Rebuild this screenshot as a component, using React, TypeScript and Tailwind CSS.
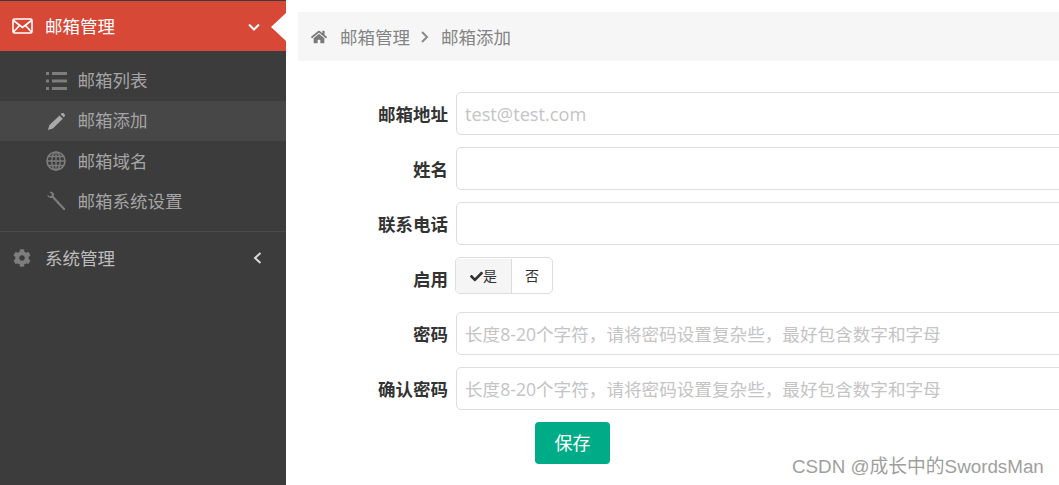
import React from "react";
import { FaCheck, FaCog, FaHome } from "react-icons/fa";

const font = "font-['Liberation_Sans','Noto_Sans_CJK_SC',sans-serif]";
const inputFont = "font-['Open_Sans','Noto_Sans_CJK_SC',sans-serif]";
const hint = "长度8-20个字符，请将密码设置复杂些，最好包含数字和字母";

const ListIcon = () => (
  <svg viewBox="0 0 21 18" className="h-[18px] w-[21px]" fill="currentColor">
    <path d="M0 0h3v3H0zM6 0h15v3H6zM0 7.500h3v3H0zM6 7.500h15v3H6zM0 15h3v3H0zM6 15h15v3H6z" />
  </svg>
);

const PencilIcon = () => (
  <svg viewBox="0 0 20 20" className="h-[19px] w-[19px] text-[#a9a9a9]" fill="currentColor">
    <path d="M13.200 3.600 16.600 7 6.200 17.400 1 19 2.600 13.800zM14.400 2.400 15.400 1.400c.6-.6 1.400-.6 2 0l1.200 1.200c.6.6.6 1.400 0 2l-1 1z" />
  </svg>
);

const GlobeIcon = () => (
  <svg viewBox="0 0 20 20" className="h-5 w-5" fill="none" stroke="currentColor" strokeWidth="1.3">
    <circle cx="10" cy="10" r="9" strokeWidth="1.6" />
    <ellipse cx="10" cy="10" rx="4.2" ry="9" />
    <path d="M10 1v18M1 10h18M2.400 5.500h15.200M2.400 14.500h15.200" />
  </svg>
);

const WrenchIcon = () => (
  <svg viewBox="0 0 20 20" className="h-5 w-5" fill="currentColor">
    <path d="M1.300 3.400 3.600 5.400 5.500 4.800 5.800 3 3.400 1C5 .3 7 .8 7.700 2.300c.4 1 .4 2 0 2.900L18.900 17.200c.5.600.4 1.200 0 1.600-.5.400-1.100.4-1.600-.1L6.100 6.800c-1.300.4-2.700.2-3.700-.7-.7-.7-1.100-1.700-1.100-2.700z" />
  </svg>
);

const subItems = [
  { label: "邮箱列表", icon: <ListIcon />, rowClass: "h-10", textClass: "pt-px" },
  { label: "邮箱添加", icon: <PencilIcon />, rowClass: "h-10 bg-[#474747]", textClass: "pt-px" },
  { label: "邮箱域名", icon: <GlobeIcon />, rowClass: "h-10", textClass: "pt-[3px]" },
  { label: "邮箱系统设置", icon: <WrenchIcon />, rowClass: "h-10", textClass: "pt-[3px]" },
];

const Chevron = ({ d, className }: { d: string; className: string }) => (
  <svg viewBox="0 0 12 12" className={className} fill="none" stroke="currentColor" strokeWidth="2">
    <path d={d} />
  </svg>
);

function Sidebar() {
  return (
    <aside className="w-[286px] shrink-0 bg-[#3c3c3c]">
      <div className="h-px bg-[#3c3c3c]" />
      <div className="relative flex h-[50px] items-center bg-[#d74836] pl-3 text-white">
        <svg viewBox="0 0 21 16" className="h-4 w-[21px]" fill="none" stroke="white" strokeWidth="1.6">
          <rect x="1" y="1" width="19" height="14" rx="1.5" />
          <path d="M1.500 2.500 10.500 9.500 19.500 2.500M1.500 14 7.500 7.500M19.500 14 13.500 7.500" />
        </svg>
        <span className="ml-3 pt-[3px] text-[17.5px]">邮箱管理</span>
        <Chevron d="M1 3.500 6 8.500 11 3.500" className="absolute left-[248px] top-[20px] h-3 w-3" />
        <div className="absolute right-0 top-[12px] h-0 w-0 border-y-[14px] border-r-[15px] border-y-transparent border-r-white" />
      </div>
      <ul className="pt-[10px] pb-[10px]">
        {subItems.map((item) => (
          <li key={item.label} className={`flex items-center text-[17.5px] text-[#a4a4a4] ${item.rowClass}`}>
            <span className="flex w-[78px] pl-[45px] text-[#7d7d7d]">
              <span className="flex w-[22px] justify-center">{item.icon}</span>
            </span>
            <span className={`-ml-[0.5px] ${item.textClass}`}>{item.label}</span>
          </li>
        ))}
      </ul>
      <div className="h-px bg-[#4a4a4a]" />
      <div className="relative flex h-[52px] items-center pl-[13px] text-[17.5px] text-[#bcbcbc]">
        <FaCog className="h-[18px] w-[18px] text-[#7d7d7d]" />
        <span className="ml-[14px] pt-[2px]">系统管理</span>
        <Chevron d="M8.500 1 3 6 8.500 11" className="absolute left-[252px] top-[20px] h-3 w-3 text-[#d8d8d8]" />
      </div>
    </aside>
  );
}

function Field({ label, placeholder, latin }: { label: string; placeholder?: string; latin?: boolean }) {
  return (
    <div className="flex h-[55px] items-start">
      <label className="w-[150px] shrink-0 pt-[11px] text-right text-[17.5px] font-bold leading-[24px] text-[#333]">{label}</label>
      <input
        readOnly
        placeholder={placeholder}
        className={`ml-2 h-[43px] w-[640px] shrink-0 rounded-[5px] border border-[#ddd] bg-white px-2 outline-none placeholder:text-[#c4c4c4] ${latin ? "text-[18.2px]" : "text-[17.6px]"} ${inputFont}`}
      />
    </div>
  );
}

export default function App() {
  return (
    <div className={`relative flex h-[485px] w-[1059px] overflow-hidden bg-white ${font}`}>
      <Sidebar />
      <main className="min-w-0 flex-1 pl-3 pt-3">
        <nav className="flex h-[49px] items-center bg-[#f6f6f6] pl-[13px] text-[17.5px] text-[#848484]">
          <FaHome className="h-4 w-4 text-[#7a7a7a]" />
          <span className="ml-[13px] pt-[3px]">邮箱管理</span>
          <Chevron d="M3 1 8 6 3 11" className="ml-[9px] mr-[10px] h-3 w-3 text-[#8a8a8a]" />
          <span className="pt-[3px]">邮箱添加</span>
        </nav>
        <form className="pt-[31px]">
          <Field label="邮箱地址" placeholder="test@test.com" latin />
          <Field label="姓名" />
          <Field label="联系电话" />
          <div className="flex h-[55px] items-start">
            <label className="w-[150px] shrink-0 pt-[11px] text-right text-[17.5px] font-bold leading-[24px] text-[#333]">启用</label>
            <div className="ml-[7px] flex h-[37px] w-[98px] overflow-hidden rounded-[5px] border border-[#ddd] pt-px text-[14px] text-[#333]">
              <span className="flex w-[56px] items-center justify-center border-r border-[#ddd] bg-[#f5f5f5]">
                <FaCheck className="h-[13px] w-[13px]" />
                是
              </span>
              <span className="flex flex-1 items-center justify-center">否</span>
            </div>
          </div>
          <Field label="密码" placeholder={hint} />
          <Field label="确认密码" placeholder={hint} />
          <button type="button" className="ml-[237px] h-[42px] w-[75px] rounded-[4px] bg-[#00ac87] pt-[2px] text-[18px] text-white">
            保存
          </button>
        </form>
      </main>
      <div className="absolute left-[792px] top-[456px] text-[18.8px] leading-[22px] text-[#a0a0a0]">CSDN @成长中的SwordsMan</div>
    </div>
  );
}
